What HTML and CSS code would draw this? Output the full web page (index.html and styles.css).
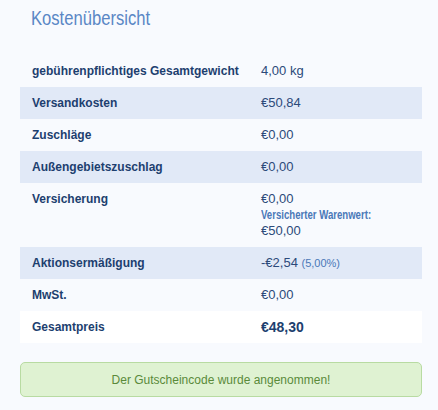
FILE: index.html
```html
<!DOCTYPE html>
<html lang="de">
<head>
<meta charset="utf-8">
<title>Kostenübersicht</title>
<link rel="stylesheet" href="styles.css">
</head>
<body>
<div class="panel">
  <h2 class="title"><span class="narrow">Kostenübersicht</span></h2>
  <div class="costs">
    <div class="row"><div class="label">gebührenpflichtiges Gesamtgewicht</div><div class="value">4,00 kg</div></div>
    <div class="row alt"><div class="label">Versandkosten</div><div class="value">€50,84</div></div>
    <div class="row"><div class="label">Zuschläge</div><div class="value">€0,00</div></div>
    <div class="row alt"><div class="label">Außengebietszuschlag</div><div class="value">€0,00</div></div>
    <div class="row"><div class="label">Versicherung</div><div class="value">€0,00<div class="note"><span class="narrow">Versicherter Warenwert:</span></div>€50,00</div></div>
    <div class="row alt"><div class="label">Aktionsermäßigung</div><div class="value">-€2,54 <span class="pct">(5,00%)</span></div></div>
    <div class="row"><div class="label">MwSt.</div><div class="value">€0,00</div></div>
    <div class="row total"><div class="label">Gesamtpreis</div><div class="value">€48,30</div></div>
  </div>
  <div class="success">Der Gutscheincode wurde angenommen!</div>
</div>
</body>
</html>
```
FILE: styles.css
```css
html, body {
  margin: 0;
  padding: 0;
  background: #f8fafe;
}
body {
  font-family: "Liberation Sans", Arial, sans-serif;
}
.panel {
  padding: 6px 16px 0 20px;
}
.narrow {
  display: inline-block;
  transform-origin: left center;
}
.title {
  margin: 0 0 0 11px;
  font-weight: normal;
  font-size: 20px;
  line-height: 24px;
  color: #5a87c5;
}
.title .narrow {
  transform: scaleX(0.83);
}
.costs {
  margin-top: 25px;
}
.row {
  display: grid;
  grid-template-columns: 241px 1fr;
  padding: 8px 0;
  line-height: 16px;
}
.row.alt {
  background: #e1e9f7;
}
.row.total {
  background: #ffffff;
}
.label {
  padding-left: 12px;
  font-size: 12px;
  font-weight: bold;
  color: #1d3f6f;
}
.value {
  font-size: 13px;
  color: #2c4a7a;
}
.total .value {
  font-size: 14px;
  font-weight: bold;
  color: #1d3f6f;
}
.note {
  font-size: 12px;
  font-weight: bold;
  color: #4a78b8;
}
.note .narrow {
  transform: scaleX(0.8);
  white-space: nowrap;
}
.pct {
  font-size: 11px;
  color: #4a78b8;
}
.success {
  margin-top: 19px;
  height: 33px;
  border: 1px solid #b8dba2;
  border-radius: 5px;
  background: #dff2d2;
  color: #5a8a3a;
  font-size: 12px;
  display: flex;
  align-items: center;
  justify-content: center;
}
```
